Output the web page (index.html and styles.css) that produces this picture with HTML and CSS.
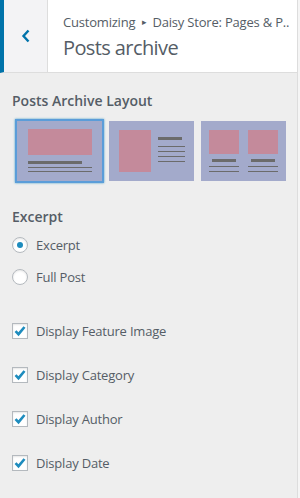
FILE: index.html
```html
<!DOCTYPE html>
<html lang="en">
<head>
    <meta charset="UTF-8">
    <meta name="viewport" content="width=device-width, initial-scale=1.0">
    <title>Posts archive</title>
    <link rel="stylesheet" href="styles.css">
</head>
<body>

<div class="customizer-panel">
    <div class="panel-header">
        <button class="back-button" aria-label="Back">
            <svg width="10" height="14" viewBox="0 0 10 14">
                <path d="M7.5 1.5 L2.5 7 L7.5 12.5" fill="none" stroke="#0073aa" stroke-width="2.4"/>
            </svg>
        </button>
        <div class="panel-title">
            <span class="breadcrumb">Customizing <span class="sep">&#9656;</span> Daisy Store: Pages &amp; P..</span>
            <h2>Posts archive</h2>
        </div>
    </div>

    <div class="panel-body">
        <div class="control">
            <span class="control-title">Posts Archive Layout</span>
            <div class="layout-options">
                <label class="layout-option selected">
                    <svg width="85" height="60" viewBox="0 0 85 60">
                        <rect width="85" height="60" fill="#a3aacb"/>
                        <rect x="11" y="8" width="64" height="26" fill="#c48a9b"/>
                        <rect x="11" y="40" width="54" height="3" fill="#6b6b6b"/>
                        <rect x="11" y="46" width="64" height="1" fill="#6b6b6b"/>
                        <rect x="11" y="50" width="64" height="1" fill="#6b6b6b"/>
                    </svg>
                </label>
                <label class="layout-option">
                    <svg width="85" height="60" viewBox="0 0 85 60">
                        <rect width="85" height="60" fill="#a3aacb"/>
                        <rect x="10" y="9" width="32" height="42" fill="#c48a9b"/>
                        <rect x="49" y="16" width="24" height="3" fill="#6b6b6b"/>
                        <rect x="49" y="25" width="27" height="1" fill="#6b6b6b"/>
                        <rect x="49" y="30" width="27" height="1" fill="#6b6b6b"/>
                        <rect x="49" y="35" width="27" height="1" fill="#6b6b6b"/>
                        <rect x="49" y="40" width="27" height="1" fill="#6b6b6b"/>
                    </svg>
                </label>
                <label class="layout-option">
                    <svg width="85" height="60" viewBox="0 0 85 60">
                        <rect width="85" height="60" fill="#a3aacb"/>
                        <rect x="8" y="9" width="30" height="24" fill="#c48a9b"/>
                        <rect x="47" y="9" width="30" height="24" fill="#c48a9b"/>
                        <rect x="11" y="38" width="24" height="3" fill="#6b6b6b"/>
                        <rect x="50" y="38" width="24" height="3" fill="#6b6b6b"/>
                        <rect x="8" y="45" width="30" height="1" fill="#6b6b6b"/>
                        <rect x="47" y="45" width="30" height="1" fill="#6b6b6b"/>
                        <rect x="8" y="50" width="30" height="1" fill="#6b6b6b"/>
                        <rect x="47" y="50" width="30" height="1" fill="#6b6b6b"/>
                    </svg>
                </label>
            </div>
        </div>

        <div class="control">
            <span class="control-title">Excerpt</span>
            <label class="choice"><span class="radio checked"></span>Excerpt</label>
            <label class="choice"><span class="radio"></span>Full Post</label>
        </div>

        <div class="control checks">
            <label class="choice"><span class="checkbox"><svg width="14" height="14" viewBox="0 0 14 14"><path d="M2.5 7.2 L5.5 10.2 L11.5 3" fill="none" stroke="#1e8cbe" stroke-width="2.6"/></svg></span>Display Feature Image</label>
            <label class="choice"><span class="checkbox"><svg width="14" height="14" viewBox="0 0 14 14"><path d="M2.5 7.2 L5.5 10.2 L11.5 3" fill="none" stroke="#1e8cbe" stroke-width="2.6"/></svg></span>Display Category</label>
            <label class="choice"><span class="checkbox"><svg width="14" height="14" viewBox="0 0 14 14"><path d="M2.5 7.2 L5.5 10.2 L11.5 3" fill="none" stroke="#1e8cbe" stroke-width="2.6"/></svg></span>Display Author</label>
            <label class="choice"><span class="checkbox"><svg width="14" height="14" viewBox="0 0 14 14"><path d="M2.5 7.2 L5.5 10.2 L11.5 3" fill="none" stroke="#1e8cbe" stroke-width="2.6"/></svg></span>Display Date</label>
        </div>
    </div>
</div>

</body>
</html>
```

FILE: styles.css
```css
body {
    margin: 0;
    background-color: #f5f5f5;
    font-family: "Open Sans", Arial, sans-serif;
    color: #555d66;
}

.customizer-panel {
    width: 297px;
    height: 498px;
    background-color: #eee;
    border-right: 1px solid #ddd;
}

.panel-header {
    display: flex;
    height: 72px;
    border-left: 4px solid #0073aa;
    border-bottom: 1px solid #ddd;
    background-color: #fff;
}

.back-button {
    width: 44px;
    padding: 0;
    border: none;
    border-right: 1px solid #ddd;
    background-color: #f3f3f5;
    display: flex;
    align-items: center;
    justify-content: center;
    cursor: pointer;
}

.panel-title {
    padding: 12px 0 0 15px;
    display: flex;
    flex-direction: column;
    white-space: nowrap;
    overflow: hidden;
}

.breadcrumb {
    font-size: 13px;
    line-height: 20px;
    letter-spacing: -0.2px;
}

.breadcrumb .sep {
    font-size: 9px;
    vertical-align: 2px;
    margin: 0 3px;
}

.panel-title h2 {
    margin: 2px 0 0;
    font-size: 20px;
    font-weight: 400;
    line-height: 28px;
    letter-spacing: -0.6px;
}

.panel-body {
    padding: 18px 12px;
}

.control {
    margin-bottom: 24px;
}

.control-title {
    display: block;
    font-size: 14px;
    font-weight: 600;
    line-height: 20px;
    margin-bottom: 8px;
}

.layout-options {
    display: flex;
    gap: 3px;
    margin: 1px 0 0 3px;
}

.layout-option {
    display: block;
    border: 2px solid transparent;
    line-height: 0;
}

.layout-option.selected {
    border-color: #5b9dd9;
    box-shadow: 0 0 2px rgba(30, 140, 190, 0.8);
}

.choice {
    display: flex;
    align-items: center;
    gap: 8px;
    font-size: 13px;
    letter-spacing: -0.2px;
    height: 20px;
    margin-bottom: 12px;
}

.radio {
    width: 14px;
    height: 14px;
    border: 1px solid #b4b9be;
    border-radius: 50%;
    background-color: #fff;
    box-shadow: inset 0 1px 2px rgba(0, 0, 0, 0.1);
    display: flex;
    align-items: center;
    justify-content: center;
}

.radio.checked::after {
    content: "";
    width: 6px;
    height: 6px;
    border-radius: 50%;
    background-color: #1e8cbe;
}

.checks {
    margin-top: 34px;
}

.checks .choice {
    margin-bottom: 24px;
}

.checkbox {
    width: 14px;
    height: 14px;
    border: 1px solid #b4b9be;
    background-color: #fff;
    box-shadow: inset 0 1px 2px rgba(0, 0, 0, 0.1);
    display: flex;
    align-items: center;
    justify-content: center;
}
```
